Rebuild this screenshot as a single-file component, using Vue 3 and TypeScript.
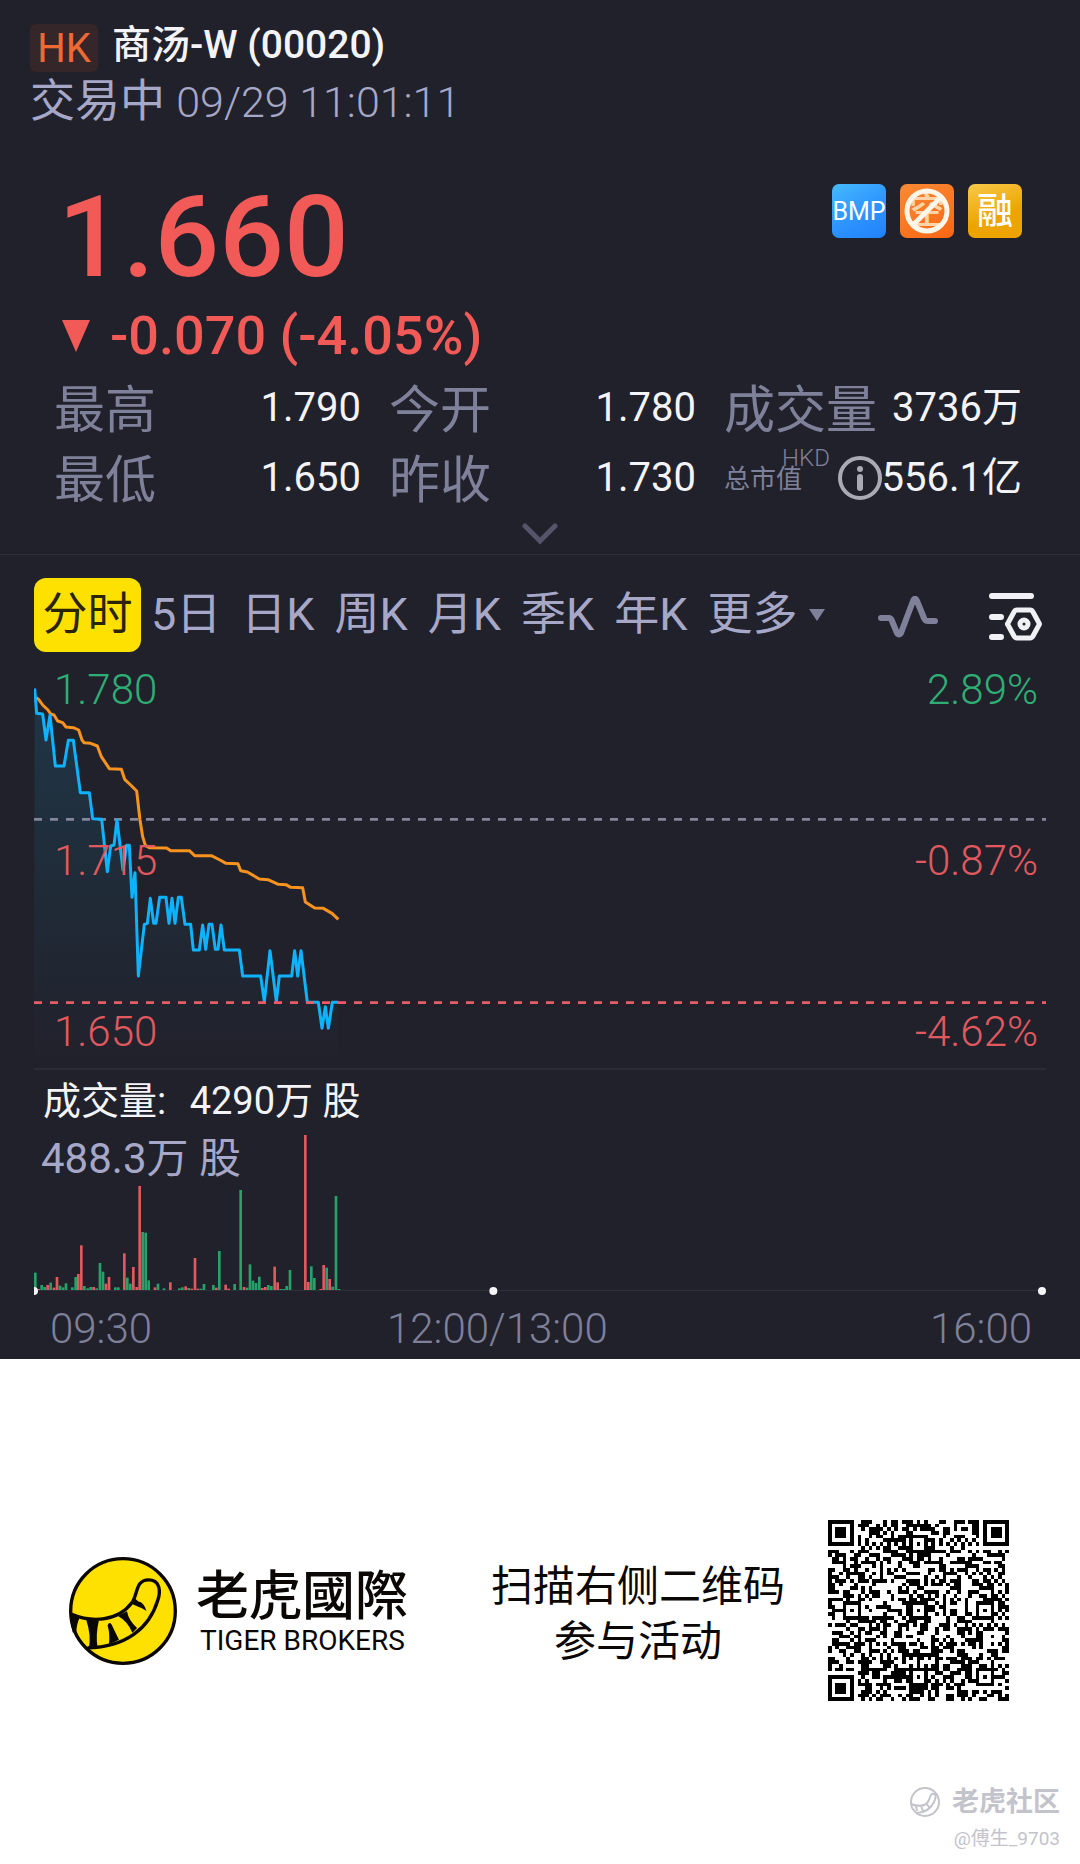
<script setup lang="ts">
interface Stat {
  label: string
  value: string
  unit?: string
}

const stats: Stat[] = [
  { label: '最高', value: '1.790' },
  { label: '今开', value: '1.780' },
  { label: '成交量', value: '3736', unit: '万' },
  { label: '最低', value: '1.650' },
  { label: '昨收', value: '1.730' },
]

const periods: string[] = ['分时', '5日', '日K', '周K', '月K', '季K', '年K']

const priceLine: string =
  '44,85 50,160 68,162 78,240 90,165 106,318 132,318 145,241 160,241 181,398 208,398 218,476 245,478 262,635 272,558 282,555 291,480 309,630 320,556 328,556 336,712 345,638 355,948 373,793 382,790 391,715 401,790 408,790 419,712 438,712 447,790 456,715 465,790 475,712 484,712 495,793 512,793 520,870 538,870 548,795 557,868 567,793 576,793 586,868 594,868 603,795 613,870 658,870 668,948 722,948 733,1025 750,872 769,1025 778,948 815,948 824,872 833,948 843,872 862,1027 895,1027 906,1105 916,1040 925,1105 937,1027 955,1027'
const averageLine: string =
  '48,112 56,118 68,135 84,150 92,162 102,165 113,183 128,188 138,201 160,203 176,210 186,240 192,248 212,250 232,258 244,290 268,326 304,328 314,358 332,375 350,393 360,480 368,530 376,556 388,563 440,564 452,572 508,572 524,587 574,587 600,600 618,610 654,611 662,632 682,636 718,657 744,659 775,673 798,674 812,682 848,683 856,726 884,744 910,745 936,760 955,778'
const areaShape: string = `42,1224 ${priceLine} 955,1224`

// Each bar: x, height, direction (g = up, r = down)
type Bar = [number, number, 'g' | 'r']
const bars: Bar[] = [
  [46, 52, 'g'], [56, 3, 'r'], [65, 15, 'g'], [74, 9, 'g'], [83, 15, 'r'], [92, 22, 'g'], [102, 7, 'r'],
  [111, 39, 'r'], [120, 13, 'g'], [129, 8, 'g'], [138, 20, 'g'], [157, 8, 'g'], [167, 39, 'g'], [175, 48, 'r'],
  [184, 134, 'r'], [193, 12, 'g'], [203, 5, 'g'], [212, 9, 'g'], [221, 9, 'r'], [230, 5, 'g'], [240, 81, 'g'],
  [249, 55, 'g'], [258, 19, 'r'], [267, 39, 'r'], [286, 8, 'g'], [295, 8, 'g'], [313, 110, 'r'], [322, 37, 'g'],
  [331, 19, 'g'], [340, 69, 'r'], [350, 9, 'r'], [359, 312, 'r'], [368, 174, 'g'], [377, 172, 'g'], [386, 29, 'g'],
  [405, 8, 'r'], [414, 19, 'g'], [432, 5, 'g'], [451, 23, 'r'], [478, 5, 'g'], [487, 8, 'g'], [497, 11, 'r'],
  [506, 6, 'g'], [515, 4, 'r'], [525, 96, 'r'], [534, 4, 'r'], [543, 4, 'g'], [552, 18, 'g'], [580, 15, 'g'],
  [589, 7, 'r'], [598, 117, 'g'], [617, 16, 'r'], [626, 4, 'r'], [644, 18, 'g'], [662, 300, 'g'], [672, 9, 'r'],
  [681, 7, 'g'], [690, 77, 'g'], [699, 28, 'g'], [708, 21, 'g'], [718, 40, 'g'], [727, 6, 'r'], [736, 9, 'r'],
  [745, 15, 'g'], [754, 12, 'g'], [764, 70, 'r'], [773, 23, 'r'], [782, 3, 'g'], [791, 3, 'g'], [800, 12, 'g'],
  [810, 60, 'g'], [856, 465, 'r'], [865, 24, 'r'], [874, 71, 'g'], [883, 36, 'g'], [902, 3, 'r'], [911, 75, 'r'],
  [920, 67, 'g'], [929, 33, 'r'], [938, 10, 'g'], [948, 282, 'g'], [957, 3, 'g'],
]

// 49 x 49 code: finder, alignment and timing patterns around the data modules
const qrSize = 49
function ring(dx: number, dy: number, radius: number): boolean {
  const d = Math.max(Math.abs(dx), Math.abs(dy))
  return radius === 3 ? d === 3 || d <= 1 : d === 2 || d === 0
}
function buildCode(): string {
  let seed = 20917
  const next = (): number => {
    seed = (seed * 1103515245 + 12345) % 2147483648
    return seed / 2147483648
  }
  const anchors = [6, 24, 42]
  let path = ''
  for (let y = 0; y < qrSize; y++) {
    for (let x = 0; x < qrSize; x++) {
      let on = next() < 0.5
      if (x === 6 || y === 6) on = (x + y) % 2 === 0
      for (const ax of anchors) {
        for (const ay of anchors) {
          const corner = ax !== 24 && ay !== 24 && !(ax === 42 && ay === 42)
          if (!corner && Math.abs(x - ax) <= 2 && Math.abs(y - ay) <= 2) on = ring(x - ax, y - ay, 2)
        }
      }
      for (const [fx, fy] of [[3, 3], [45, 3], [3, 45]]) {
        if (Math.abs(x - fx) <= 4 && Math.abs(y - fy) <= 4) on = ring(x - fx, y - fy, 3)
      }
      if (on) path += `M${x} ${y}h1v1h-1z`
    }
  }
  return path
}
const codePath: string = buildCode()
</script>

<template>
  <div class="page">
    <main class="panel">
      <header class="head">
        <div class="title-row">
          <span class="market">HK</span>
          <h1 class="name">商汤-W (00020)</h1>
        </div>
        <p class="session">交易中 <span class="session-time">09/29 11:01:11</span></p>
      </header>

      <section class="quote">
        <div class="price-row">
          <div class="price">1.660</div>
          <div class="badges">
            <span class="badge bmp">BMP</span>
            <span class="badge short">空
              <svg viewBox="0 0 54 54" aria-hidden="true">
                <circle cx="27" cy="27" r="20" /><path d="M13 41 41 13" />
              </svg>
            </span>
            <span class="badge margin">融</span>
          </div>
        </div>
        <div class="change">
          <svg class="down" viewBox="0 0 28 32" aria-hidden="true"><path d="M0 0h28L14 32z" /></svg>
          <span>-0.070 (-4.05%)</span>
        </div>

        <dl class="stats">
          <div v-for="s in stats" :key="s.label" class="stat">
            <dt>{{ s.label }}</dt>
            <dd>{{ s.value }}<span v-if="s.unit" class="unit">{{ s.unit }}</span></dd>
          </div>
          <div class="stat">
            <dt class="cap">总市值<sup>HKD</sup></dt>
            <dd class="with-icon">
              <svg class="info" viewBox="0 0 44 44" aria-hidden="true">
                <circle cx="22" cy="22" r="20" /><path d="M22 21v11" /><circle class="dot" cx="22" cy="13" r="3" />
              </svg>
              <span>556.1<span class="unit">亿</span></span>
            </dd>
          </div>
        </dl>
        <button class="expand" type="button" aria-label="展开">
          <svg viewBox="0 0 36 22"><path d="M3 3l15 15L33 3" /></svg>
        </button>
      </section>

      <nav class="tabs">
        <button v-for="(p, i) in periods" :key="p" type="button" class="tab" :class="{ active: i === 0 }">{{ p }}</button>
        <button type="button" class="tab more">更多
          <svg viewBox="0 0 18 14" aria-hidden="true"><path d="M1 1h16L9 13z" /></svg>
        </button>
        <button type="button" class="tool pulse" aria-label="指标">
          <svg viewBox="0 0 60 42"><path d="M3 22h8c2 0 2 1 3 3l5 12c1 2 3 2 4 0L35 5c1-3 3-3 4 0l7 17c1 3 2 3 4 3h7" /></svg>
        </button>
        <button type="button" class="tool settings" aria-label="设置">
          <svg viewBox="0 0 54 50">
            <path d="M4 4h39M4 25h9M4 45h9" />
            <path class="hex" d="M29 18h13q2 0 3 2l6 11q1 1 0 2l-6 11q-1 2-3 2H29q-2 0-3-2l-6-11q-1-1 0-2l6-11q1-2 3-2z" />
            <circle class="hex" cx="36" cy="32" r="4" />
          </svg>
        </button>
      </nav>

      <section class="chart">
        <svg class="plot" viewBox="42 42 3036 1182" aria-hidden="true">
          <defs>
            <linearGradient id="fade" x1="0" y1="0" x2="0" y2="1">
              <stop offset="0" stop-color="#12a5d8" stop-opacity="0.16" />
              <stop offset="1" stop-color="#12a5d8" stop-opacity="0" />
            </linearGradient>
          </defs>
          <polygon :points="areaShape" fill="url(#fade)" />
          <path class="dash" d="M42 478H3078" stroke="#84859b" />
          <polyline class="line" :points="averageLine" stroke="#f7931e" />
          <polyline class="line" :points="priceLine" stroke="#0fb2fc" />
          <path class="dash" d="M42 1028H3078" stroke="#ee5a63" />
        </svg>
        <div class="scale">
          <div class="scale-row up"><span>1.780</span><span>2.89%</span></div>
          <div class="scale-row"><span>1.715</span><span>-0.87%</span></div>
          <div class="scale-row"><span>1.650</span><span>-4.62%</span></div>
        </div>
      </section>

      <section class="volume">
        <svg class="plot" viewBox="42 30 3036 675" aria-hidden="true">
          <path d="M42 691H3078" stroke="#2e2e3b" stroke-width="4" />
          <rect
            v-for="b in bars" :key="b[0]" :x="b[0] - 4" :y="690 - b[1]" width="8" :height="b[1]"
            :fill="b[2] === 'g' ? '#26a269' : '#e0595c'"
          />
          <circle v-for="x in [42, 1420, 3066]" :key="x" :cx="x" cy="693" r="12" fill="#f6f6f8" />
        </svg>
        <div class="volume-text">
          <p class="now">成交量: <span>4290万 股</span></p>
          <p class="peak">488.3万 股</p>
        </div>
      </section>
      <div class="times"><span>09:30</span><span>12:00/13:00</span><span>16:00</span></div>
    </main>

    <footer class="promo">
      <div class="promo-row">
        <div class="brand">
          <svg class="logo" viewBox="54 51 328 328" aria-hidden="true">
            <circle cx="218" cy="215" r="156" fill="#ffe100" stroke="#0b0705" stroke-width="10" />
            <path d="M65 225C120 248 200 250 245 190C262 165 256 122 294 122C330 122 330 158 322 182C296 268 226 322 112 325" fill="none" stroke="#0b0705" stroke-width="10" />
            <path d="M62 222l28 11q-10 18-11 44l-11 2q-8-28-6-57zM108 240l38 4q-10 40-4 80l-26 3q8-40-8-87zM172 258q5-12 12-3l22 46-30 14q4-32-4-57zM203 230l27-14q4 26 30 50l-14 14q-14-34-43-50zM240 192l14-14 10 9q16 2 24 28-16-10-28-14z" fill="#0b0705" />
          </svg>
          <div class="brand-text"><strong>老虎國際</strong><span>TIGER BROKERS</span></div>
        </div>
        <p class="invite">扫描右侧二维码<br />参与活动</p>
        <svg class="code" viewBox="0 0 49 49" shape-rendering="crispEdges" role="img" aria-label="二维码"><path :d="codePath" /></svg>
      </div>
      <div class="credit">
        <div class="community">
          <svg viewBox="0 0 32 32" aria-hidden="true">
            <circle cx="16" cy="16" r="14" />
            <path d="M2 18q14 5 18-4c2-6 3-7 5-6 3 1 1 6 0 8-4 8-10 11-18 11M7 20l1 5M12 20l2 5M17 17l3 4" />
          </svg>
          <span>老虎社区</span>
        </div>
        <span class="author">@傅生_9703</span>
      </div>
    </footer>
  </div>
</template>

<style>
body {
  margin: 0;
  background: #fff;
}
</style>

<style scoped>
.page {
  display: flex;
  flex-direction: column;
  min-height: 100vh;
  font-family: Roboto, "Noto Sans CJK SC", sans-serif;
}
h1, p, dl, dt, dd {
  margin: 0;
  font-weight: 400;
}
svg {
  display: block;
}
button {
  padding: 0;
  border: 0;
  background: none;
  font: inherit;
  color: inherit;
}
.panel {
  background: #21212b;
  color: #f4f4f8;
}
.head {
  padding: 24px 30px 0;
}
.title-row {
  display: flex;
  align-items: flex-start;
  gap: 14px;
}
.market {
  width: 68px;
  height: 48px;
  border-radius: 6px;
  background: #35262a;
  color: #ee6a35;
  font-size: 40px;
  line-height: 50px;
  text-align: center;
}
.name {
  font-size: 39px;
  font-weight: 500;
  line-height: 42px;
}
.session {
  padding-top: 2px;
  color: #a7a8c8;
  font-size: 45px;
  line-height: 56px;
}
.session-time {
  font-size: 43px;
  font-weight: 300;
}
.price-row {
  display: flex;
  justify-content: space-between;
  padding: 48px 58px 0;
}
.price {
  height: 118px;
  color: #f25a58;
  font-size: 114px;
  font-weight: 500;
  line-height: 118px;
}
.badges {
  display: flex;
  gap: 14px;
  padding-top: 6px;
}
.badge {
  position: relative;
  width: 54px;
  height: 54px;
  border-radius: 7px;
  color: #fff;
  font-size: 36px;
  font-weight: 500;
  line-height: 56px;
  text-align: center;
}
.bmp {
  background: linear-gradient(150deg, #45bbfc, #2f96ff 50%, #2081fa);
  font-size: 25px;
  font-weight: 400;
}
.short {
  background: linear-gradient(150deg, #f98a34, #fb6614);
  color: #ffd3a8;
}
.short svg {
  position: absolute;
  inset: 0;
  fill: none;
  stroke: #fff6ea;
  stroke-width: 5;
}
.margin {
  background: linear-gradient(160deg, #f8c94a, #eda400 60%);
}
.change {
  display: flex;
  align-items: center;
  gap: 20px;
  padding: 8px 62px 3px;
  color: #f25a58;
  font-size: 54px;
  font-weight: 500;
  line-height: 64px;
}
.down {
  width: 28px;
  fill: currentColor;
}
.stats {
  display: grid;
  grid-template-columns: 307fr 307fr 298fr;
  column-gap: 28px;
  padding: 0 58px 0 54px;
}
.stat {
  display: flex;
  align-items: center;
  justify-content: space-between;
  height: 70px;
  white-space: nowrap;
}
dt {
  color: #7f8099;
  font-size: 51px;
}
dd {
  padding-top: 4px;
  font-size: 40px;
  line-height: 48px;
}
.unit {
  line-height: 1;
}
.cap {
  display: flex;
  font-size: 26px;
}
.cap sup {
  width: 28px;
  margin-left: -20px;
  margin-top: -14px;
  font-size: 24px;
  font-weight: 300;
  vertical-align: baseline;
}
.with-icon {
  display: flex;
  align-items: center;
}
.info {
  width: 44px;
  fill: none;
  stroke: #aaaab4;
  stroke-width: 4;
}
.info path {
  stroke-width: 6;
  stroke-linecap: round;
}
.info .dot {
  fill: #aaaab4;
  stroke: none;
}
.expand {
  display: block;
  margin: 0 auto;
  padding: 12px 0 9px;
}
.expand svg {
  width: 36px;
  fill: none;
  stroke: #54556a;
  stroke-width: 5;
  stroke-linecap: round;
}
.tabs {
  display: flex;
  align-items: center;
  padding: 23px 38px 22px 34px;
  border-top: 1px solid #30303d;
  color: #a7a8c8;
  font-size: 45px;
  line-height: 74px;
  white-space: nowrap;
}
.tab {
  margin-right: 20px;
}
.tab.active {
  width: 107px;
  margin-right: 10px;
  border-radius: 12px;
  background: #ffe100;
  color: #2a2408;
}
.more {
  display: flex;
  align-items: center;
  gap: 10px;
}
.more svg {
  width: 18px;
  fill: #7f8099;
}
.tool svg {
  margin-top: 4px;
  fill: none;
  stroke-linecap: round;
  stroke-linejoin: round;
}
.pulse {
  margin-left: auto;
}
.pulse svg {
  width: 60px;
  stroke: #7f8099;
  stroke-width: 6;
}
.settings {
  margin-left: 50px;
}
.settings svg {
  width: 54px;
  stroke: #f1f1f5;
  stroke-width: 6;
}
.settings .hex {
  stroke-width: 5;
}
.chart {
  position: relative;
  margin: 0 34px;
  border-bottom: 2px solid #2b2b37;
}
.plot {
  width: 100%;
}
.dash {
  stroke-width: 8;
  stroke-dasharray: 24;
}
.line {
  fill: none;
  stroke-width: 9;
  stroke-linejoin: round;
}
.scale {
  position: absolute;
  inset: 0 8px 20px 20px;
  display: flex;
  flex-direction: column;
  justify-content: space-between;
}
.scale-row {
  display: flex;
  justify-content: space-between;
  color: #e0595f;
  font-size: 42px;
  font-weight: 300;
  line-height: 32px;
}
.scale-row.up {
  color: #2fae74;
}
.volume {
  position: relative;
  margin: 0 34px;
}
.volume-text {
  position: absolute;
  top: 0;
  left: 7px;
}
.now {
  padding: 6px 0 0 2px;
  font-size: 38px;
  line-height: 50px;
}
.now span {
  margin-left: 14px;
}
.peak {
  color: #a7a8c8;
  font-size: 42px;
  line-height: 66px;
}
.times {
  display: grid;
  grid-template-columns: 337fr 322fr 323fr;
  margin: 4px 48px 0 50px;
  color: #7f8099;
  font-size: 42px;
  font-weight: 300;
  line-height: 60px;
}
.times span:last-child {
  text-align: right;
}
.promo {
  display: flex;
  flex: 1;
  flex-direction: column;
  justify-content: space-between;
  padding: 161px 20px 8px 68px;
  color: #0b0705;
}
.promo-row {
  display: flex;
  align-items: center;
  justify-content: space-between;
  padding-right: 51px;
}
.brand {
  display: flex;
  align-items: center;
  gap: 18px;
}
.logo {
  width: 110px;
}
.brand-text {
  display: flex;
  flex-direction: column;
}
.brand-text strong {
  font-family: "Noto Sans CJK TC", sans-serif;
  font-size: 53px;
  font-weight: 500;
  line-height: 60px;
}
.brand-text span {
  padding-left: 4px;
  font-size: 28px;
  line-height: 38px;
}
.invite {
  margin-left: 40px;
  padding-top: 6px;
  font-size: 42px;
  line-height: 55px;
  text-align: center;
}
.code {
  width: 181px;
}
.credit {
  display: flex;
  flex-direction: column;
  align-items: flex-end;
  color: #c3c3cb;
}
.community {
  display: flex;
  align-items: center;
  gap: 11px;
  font-size: 27px;
  font-weight: 700;
  line-height: 40px;
}
.community svg {
  width: 32px;
  fill: none;
  stroke: #c3c3cb;
  stroke-width: 2;
}
.author {
  font-size: 19px;
  line-height: 34px;
}
</style>
